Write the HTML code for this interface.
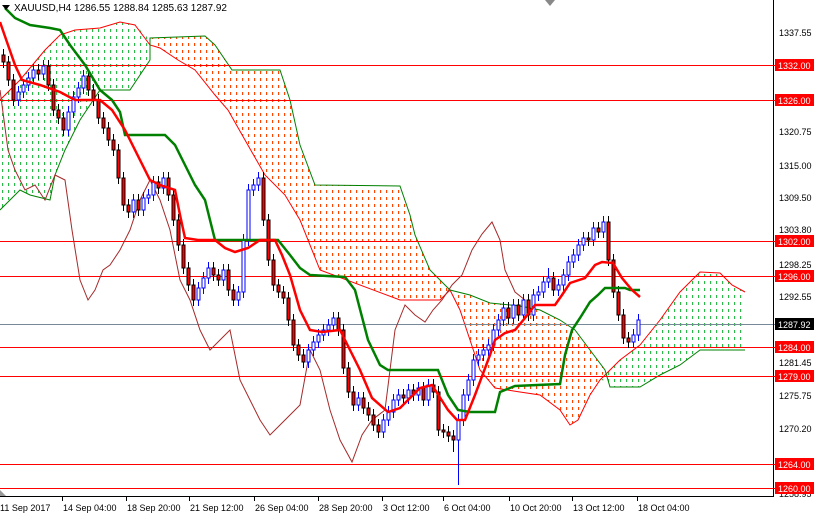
<!DOCTYPE html>
<html><head><meta charset="utf-8"><style>
html,body{margin:0;padding:0;background:#fff;}
svg{display:block;font-family:"Liberation Sans",sans-serif;}
</style></head><body>
<svg width="814" height="514" xmlns="http://www.w3.org/2000/svg">
<defs>
<pattern id="po" width="6" height="7" patternUnits="userSpaceOnUse"><rect x="2" y="1" width="1.2" height="3" fill="#ff4500"/></pattern>
<pattern id="pg" width="6" height="7" patternUnits="userSpaceOnUse"><rect x="2" y="1" width="1.2" height="3" fill="#2eb84b"/></pattern>
</defs>
<rect width="814" height="514" fill="#fff"/>
<polygon fill="url(#pg)" points="0,100 20,80 45,50 60,35 75,30 100,28 120,22 135,25 150,40 150,60 130,90 100,90 80,120 65,150 55,175 50,200 30,195 20,190 0,210"/>
<polygon fill="url(#po)" points="150,38 205,36 215,45 232,70 280,70 290,100 300,145 315,185 400,186 410,215 415,235 430,270 450,290 440,300 420,300 400,300 320,270 300,220 285,195 265,175 245,140 228,110 215,95 195,70 178,60 160,48"/>
<polygon fill="url(#po)" points="450,290 470,295 490,303 520,306 540,310 560,320 575,330 590,350 605,370 600,380 590,395 578,420 570,425 560,410 540,395 520,392 495,388 480,370 470,340 460,310"/>
<polygon fill="url(#pg)" points="600,378 620,360 640,345 660,320 680,292 700,272 720,273 732,285 745,292 745,350 700,350 680,365 660,375 640,387 610,387"/>
<polyline fill="none" stroke="#ff0000" stroke-width="1" points="0,100 20,80 45,50 60,35 75,30 100,28 120,22 135,25 150,45 160,48 178,60 195,70 215,95 228,110 245,140 265,175 285,195 300,220 320,270 400,300 420,300 440,300 450,290 460,310 470,340 480,370 495,388 520,392 540,395 560,410 570,425 578,420 590,395 600,380 620,360 640,345 660,320 680,292 700,272 720,273 732,285 745,292"/>
<polyline fill="none" stroke="#008000" stroke-width="1" points="0,210 20,190 30,195 50,200 55,175 65,150 80,120 100,90 130,90 150,60 150,38 205,36 215,45 232,70 280,70 290,100 300,145 315,185 400,186 410,215 415,235 430,270 450,290 470,295 490,303 520,306 540,310 560,320 575,330 590,350 605,370 610,387 640,387 660,375 680,365 700,350 745,350"/>
<g stroke="#ff0000" stroke-width="1">
<line x1="0" y1="65.5" x2="775" y2="65.5"/><line x1="0" y1="100.5" x2="775" y2="100.5"/>
<line x1="0" y1="241.5" x2="775" y2="241.5"/><line x1="0" y1="276.5" x2="775" y2="276.5"/>
<line x1="0" y1="347.5" x2="775" y2="347.5"/><line x1="0" y1="376.5" x2="775" y2="376.5"/>
<line x1="0" y1="464.5" x2="775" y2="464.5"/><line x1="0" y1="488.5" x2="775" y2="488.5"/>
</g>
<line x1="0" y1="324.5" x2="775" y2="324.5" stroke="#778899"/>
<polyline fill="none" stroke="#a52a2a" stroke-width="1" points="0,90 8,150 15,170 25,190 35,185 45,200 55,175 65,180 72,230 80,280 88,300 95,290 103,270 110,265 120,250 130,230 140,200 150,180 160,200 170,230 180,280 190,300 200,330 210,350 220,340 230,330 240,380 250,400 260,420 270,435 280,425 290,415 300,405 310,350 320,370 330,410 340,440 352,462 362,435 372,420 385,410 395,330 405,305 415,315 425,322 433,310 442,300 452,285 462,275 472,250 482,234 492,222 500,240 505,270 515,292 525,300"/>
<!-- candles -->
<path fill="none" stroke="#000" d="M3.5,49V68 M8.5,56V86 M13.5,74V106 M38.5,64V80 M48.5,60V91 M53.5,79V116 M58.5,104V124 M63.5,112V136 M88.5,70V96 M93.5,84V106 M98.5,94V124 M103.5,112V134 M108.5,122V146 M113.5,134V156 M118.5,144V184 M123.5,172V211 M128.5,199V218 M138.5,194V216 M158.5,176V194 M168.5,172V201 M173.5,189V226 M178.5,214V251 M183.5,239V274 M188.5,262V291 M193.5,279V306 M213.5,262V281 M218.5,269V286 M228.5,264V296 M233.5,284V306 M263.5,172V226 M268.5,214V266 M273.5,254V291 M278.5,279V298 M283.5,286V304 M288.5,292V326 M293.5,314V351 M298.5,339V361 M303.5,349V368 M338.5,312V336 M343.5,324V374 M348.5,362V398 M353.5,386V411 M363.5,392V414 M368.5,402V421 M373.5,409V431 M378.5,419V438 M403.5,389V404 M413.5,384V401 M423.5,382V406 M433.5,379V398 M438.5,386V436 M443.5,424V438 M448.5,426V442 M453.5,430V452 M508.5,302V324 M518.5,299V321 M528.5,294V321 M553.5,272V296 M588.5,232V246 M598.5,222V238 M608.5,216V266 M613.5,254V298 M618.5,286V321 M623.5,309V344 M628.5,332V348"/>
<path fill="#ff0000" stroke="#000" d="M2,55h3v7h-3z M7,62h3v18h-3z M12,80h3v20h-3z M37,70h3v4h-3z M47,66h3v19h-3z M52,85h3v25h-3z M57,110h3v8h-3z M62,118h3v12h-3z M87,76h3v14h-3z M92,90h3v10h-3z M97,100h3v18h-3z M102,118h3v10h-3z M107,128h3v12h-3z M112,140h3v10h-3z M117,150h3v28h-3z M122,178h3v27h-3z M127,205h3v7h-3z M137,200h3v10h-3z M157,182h3v6h-3z M167,178h3v17h-3z M172,195h3v25h-3z M177,220h3v25h-3z M182,245h3v23h-3z M187,268h3v17h-3z M192,285h3v15h-3z M212,268h3v7h-3z M217,275h3v5h-3z M227,270h3v20h-3z M232,290h3v10h-3z M262,178h3v42h-3z M267,220h3v40h-3z M272,260h3v25h-3z M277,285h3v7h-3z M282,292h3v6h-3z M287,298h3v22h-3z M292,320h3v25h-3z M297,345h3v10h-3z M302,355h3v7h-3z M337,318h3v12h-3z M342,330h3v38h-3z M347,368h3v24h-3z M352,392h3v13h-3z M362,398h3v10h-3z M367,408h3v7h-3z M372,415h3v10h-3z M377,425h3v7h-3z M402,395h3v3h-3z M412,390h3v5h-3z M422,388h3v12h-3z M432,385h3v7h-3z M437,392h3v38h-3z M442,430h3v2h-3z M447,432h3v4h-3z M452,436h3v4h-3z M507,308h3v10h-3z M517,305h3v10h-3z M527,300h3v15h-3z M552,278h3v12h-3z M587,238h3v2h-3z M597,228h3v4h-3z M607,222h3v38h-3z M612,260h3v32h-3z M617,292h3v23h-3z M622,315h3v23h-3z M627,338h3v4h-3z"/>
<path fill="none" stroke="#0000ff" d="M18.5,86V106 M23.5,79V98 M28.5,72V91 M33.5,64V84 M43.5,60V80 M68.5,106V136 M73.5,91V118 M78.5,82V103 M83.5,70V94 M133.5,194V218 M143.5,192V216 M148.5,189V204 M153.5,176V201 M163.5,172V194 M198.5,282V306 M203.5,272V294 M208.5,262V284 M223.5,264V286 M238.5,286V306 M243.5,234V298 M248.5,184V246 M253.5,179V196 M258.5,172V191 M308.5,344V368 M313.5,336V356 M318.5,329V348 M323.5,324V341 M328.5,319V336 M333.5,312V331 M358.5,392V411 M383.5,414V438 M388.5,406V426 M393.5,394V418 M398.5,389V406 M408.5,384V404 M418.5,382V401 M428.5,379V406 M458.5,414V485 M463.5,389V426 M468.5,374V401 M473.5,354V386 M478.5,349V366 M483.5,344V361 M488.5,339V356 M493.5,324V351 M498.5,314V336 M503.5,302V326 M513.5,299V324 M523.5,294V321 M533.5,289V321 M538.5,286V301 M543.5,276V298 M548.5,268V288 M558.5,279V296 M563.5,269V291 M568.5,256V281 M573.5,249V268 M578.5,239V261 M583.5,232V251 M593.5,222V246 M603.5,216V238 M633.5,329V348 M638.5,314V341"/>
<path fill="#fff" stroke="#0000ff" d="M17,92h3v8h-3z M22,85h3v7h-3z M27,78h3v7h-3z M32,70h3v8h-3z M42,66h3v8h-3z M67,112h3v18h-3z M72,97h3v15h-3z M77,88h3v9h-3z M82,76h3v12h-3z M132,200h3v12h-3z M142,198h3v12h-3z M147,195h3v3h-3z M152,182h3v13h-3z M162,178h3v10h-3z M197,288h3v12h-3z M202,278h3v10h-3z M207,268h3v10h-3z M222,270h3v10h-3z M237,292h3v8h-3z M242,240h3v52h-3z M247,190h3v50h-3z M252,185h3v5h-3z M257,178h3v7h-3z M307,350h3v12h-3z M312,342h3v8h-3z M317,335h3v7h-3z M322,330h3v5h-3z M327,325h3v5h-3z M332,318h3v7h-3z M357,398h3v7h-3z M382,420h3v12h-3z M387,412h3v8h-3z M392,400h3v12h-3z M397,395h3v5h-3z M407,390h3v8h-3z M417,388h3v7h-3z M427,385h3v15h-3z M457,420h3v20h-3z M462,395h3v25h-3z M467,380h3v15h-3z M472,360h3v20h-3z M477,355h3v5h-3z M482,350h3v5h-3z M487,345h3v5h-3z M492,330h3v15h-3z M497,320h3v10h-3z M502,308h3v12h-3z M512,305h3v13h-3z M522,300h3v15h-3z M532,295h3v20h-3z M537,292h3v3h-3z M542,282h3v10h-3z M547,278h3v4h-3z M557,285h3v5h-3z M562,275h3v10h-3z M567,262h3v13h-3z M572,255h3v7h-3z M577,245h3v10h-3z M582,238h3v7h-3z M592,228h3v12h-3z M602,222h3v10h-3z M632,335h3v7h-3z M637,320h3v15h-3z"/>
<polyline fill="none" stroke="#008000" stroke-width="2.5" points="5,8 15,18 30,25 50,28 60,30 70,45 85,65 100,90 112,100 120,112 125,135 165,135 175,145 185,165 195,185 205,200 215,240 278,240 290,255 300,268 310,275 345,277 355,290 368,340 380,365 388,370 438,370 448,395 458,410 470,412 495,412 500,392 515,386 560,384 565,355 572,330 580,318 590,302 598,295 605,288 625,288 630,290 640,290"/>
<polyline fill="none" stroke="#ff0000" stroke-width="2.5" points="0,22 8,45 15,65 22,80 40,85 60,92 75,100 100,100 112,110 125,130 135,150 150,180 160,185 175,190 180,215 185,238 198,240 215,240 225,248 235,252 248,248 260,240 275,240 282,255 290,275 300,310 310,330 322,332 340,330 345,340 360,370 372,398 388,412 400,408 420,388 432,385 448,410 457,420 465,420 475,395 490,355 495,340 505,333 515,330 525,318 535,305 555,305 562,295 570,283 585,278 595,265 602,262 613,263 622,278 632,290 640,297"/>
<line x1="773.5" y1="0" x2="773.5" y2="497" stroke="#000"/>
<line x1="0" y1="496.5" x2="774" y2="496.5" stroke="#000"/>
<g font-size="9" fill="#000">
<text x="779" y="36">1337.55</text><text x="779" y="135">1320.75</text><text x="779" y="169">1315.00</text>
<text x="779" y="201">1309.50</text><text x="779" y="233">1303.80</text><text x="779" y="268">1298.25</text>
<text x="779" y="300">1292.55</text><text x="779" y="366">1281.45</text><text x="779" y="399">1275.75</text>
<text x="779" y="432">1270.20</text><text x="779" y="497">1258.95</text>
</g>
<g font-size="9">
<rect x="775" y="59" width="39" height="12" fill="#ff0000"/><text x="778" y="69" fill="#fff">1332.00</text>
<rect x="775" y="94" width="39" height="12" fill="#ff0000"/><text x="778" y="104" fill="#fff">1326.00</text>
<rect x="775" y="235" width="39" height="12" fill="#ff0000"/><text x="778" y="245" fill="#fff">1302.00</text>
<rect x="775" y="270" width="39" height="12" fill="#ff0000"/><text x="778" y="280" fill="#fff">1296.00</text>
<rect x="775" y="318" width="39" height="12" fill="#000"/><text x="778" y="328" fill="#fff">1287.92</text>
<rect x="775" y="341" width="39" height="12" fill="#ff0000"/><text x="778" y="351" fill="#fff">1284.00</text>
<rect x="775" y="370" width="39" height="12" fill="#ff0000"/><text x="778" y="380" fill="#fff">1279.00</text>
<rect x="775" y="458" width="39" height="12" fill="#ff0000"/><text x="778" y="468" fill="#fff">1264.00</text>
<rect x="775" y="482" width="39" height="12" fill="#ff0000"/><text x="778" y="492" fill="#fff">1260.00</text>
</g>
<g font-size="9" fill="#000">
<text x="0" y="511">11 Sep 2017</text><text x="63" y="511">14 Sep 04:00</text><text x="127" y="511">18 Sep 20:00</text>
<text x="190" y="511">21 Sep 12:00</text><text x="255" y="511">26 Sep 04:00</text><text x="319" y="511">28 Sep 20:00</text>
<text x="383" y="511">3 Oct 12:00</text><text x="444" y="511">6 Oct 04:00</text><text x="510" y="511">10 Oct 20:00</text>
<text x="573" y="511">13 Oct 12:00</text><text x="638" y="511">18 Oct 04:00</text>
</g>
<g stroke="#000"><line x1="62.5" y1="497" x2="62.5" y2="501"/><line x1="126.5" y1="497" x2="126.5" y2="501"/><line x1="189.5" y1="497" x2="189.5" y2="501"/><line x1="254.5" y1="497" x2="254.5" y2="501"/><line x1="318.5" y1="497" x2="318.5" y2="501"/><line x1="382.5" y1="497" x2="382.5" y2="501"/><line x1="443.5" y1="497" x2="443.5" y2="501"/><line x1="509.5" y1="497" x2="509.5" y2="501"/><line x1="572.5" y1="497" x2="572.5" y2="501"/><line x1="637.5" y1="497" x2="637.5" y2="501"/></g>
<polygon points="0,490 6,496 0,496" fill="#999"/>
<polygon points="545,0 555,0 550,6" fill="#888"/>
<polygon points="2,5 10,5 6,10" fill="#000"/>
<text x="14" y="11" font-size="10" fill="#000">XAUUSD,H4  1286.55 1288.84 1285.63 1287.92</text>
</svg>
</body></html>
